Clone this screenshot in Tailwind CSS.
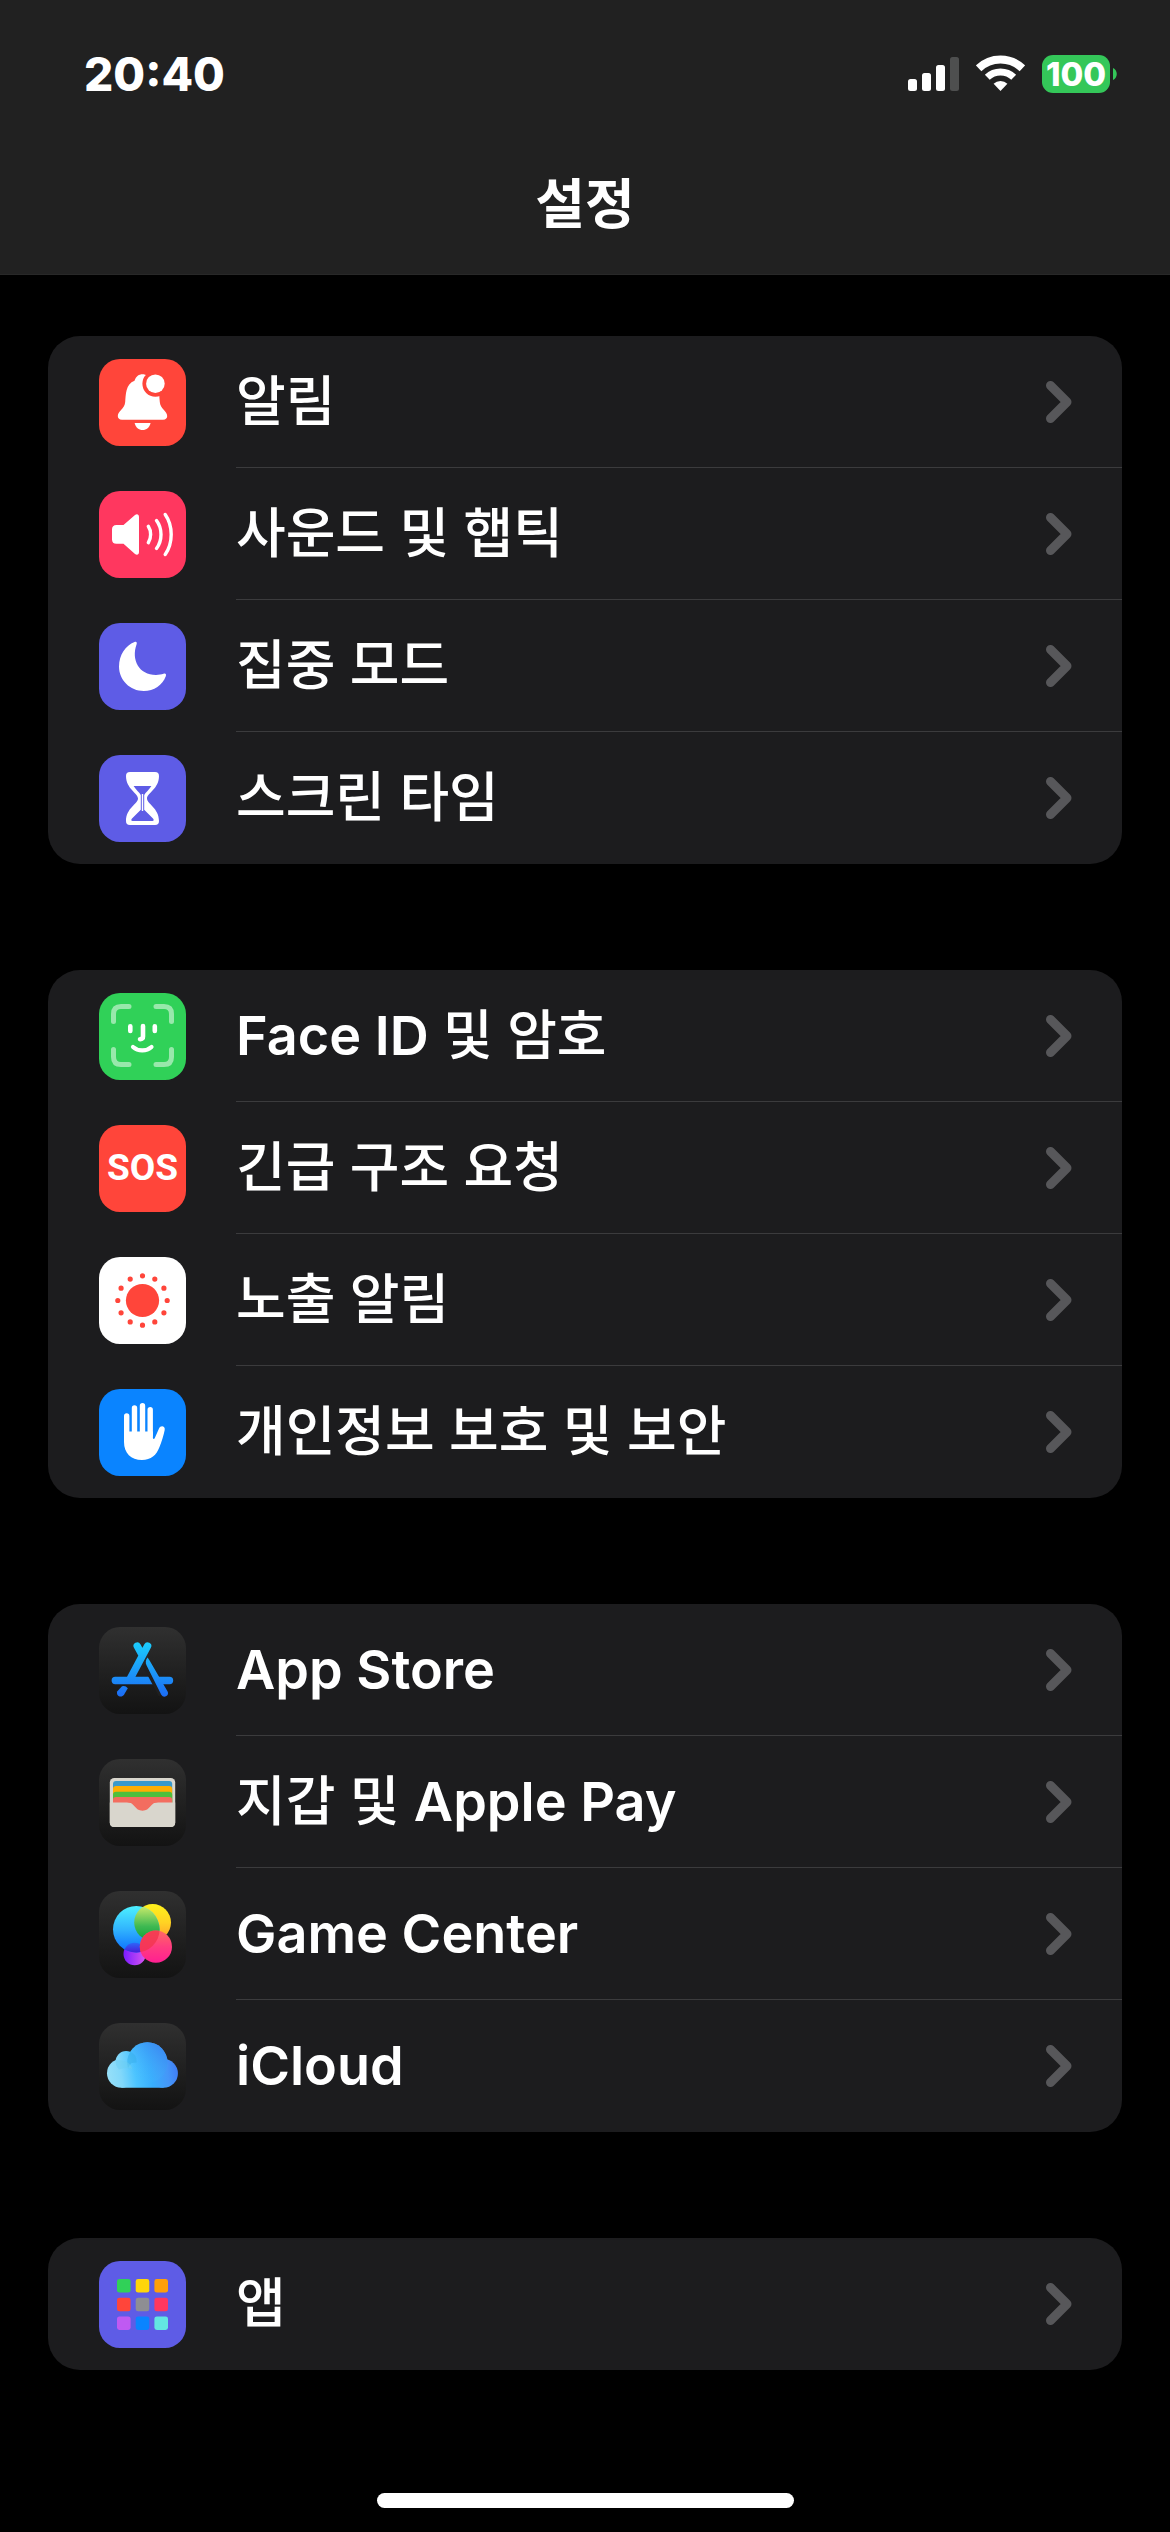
<!DOCTYPE html>
<html lang="ko">
<head>
  <meta charset="UTF-8">
  <meta name="viewport" content="width=device-width, initial-scale=1.0">
  <title>설정</title>
  <script src="https://cdn.jsdelivr.net/npm/@tailwindcss/browser@4"></script>
</head>
<body class="bg-black min-h-screen flex flex-col text-white font-['Inter','Noto_Sans_CJK_KR',sans-serif]">
  <!-- shared chevron -->
  <svg class="hidden" aria-hidden="true">
    <symbol id="chevron" viewBox="0 0 26 42">
      <path d="M4.5 4.5 21 21 4.5 37.5" fill="none" stroke="#57575a" stroke-width="9" stroke-linecap="round" stroke-linejoin="round"/>
    </symbol>
  </svg>

  <header class="bg-[#212121] border-b border-[#282828] h-[275px] flex flex-col">
    <div class="flex items-center justify-between h-[148px] pl-[84px] pr-[53px]">
      <time class="text-[46px] leading-[56px] font-extrabold">20:40</time>
      <div class="flex items-center gap-[17px]">
        <svg class="w-[51px] h-[38px]" viewBox="0 0 51 38" fill="#fff">
          <rect x="0" y="24" width="9" height="12" rx="2.5"/>
          <rect x="14" y="18" width="9" height="18" rx="2.5"/>
          <rect x="28" y="10" width="9" height="26" rx="2.5"/>
          <rect x="42" y="2" width="9" height="34" rx="2.5" fill="#4e4f4f"/>
        </svg>
        <svg class="w-[49px] h-[38px]" viewBox="0 0 49 38" fill="none" stroke="#fff">
          <path d="M2.6 13.3A31.5 31.5 0 0 1 46.4 13.3" stroke-width="8"/>
          <path d="M11.3 22.3A19 19 0 0 1 37.7 22.3" stroke-width="7"/>
          <path d="M24.5 36 17.6 28.8A10 10 0 0 1 31.4 28.8Z" fill="#fff" stroke="none"/>
        </svg>
        <div class="flex items-center gap-[3px]">
          <span class="w-[68px] h-[38px] flex items-center justify-center rounded-[11px] bg-[#34c759] text-[33px] leading-[38px] font-extrabold">100</span>
          <svg class="w-[4px] h-[12px]" viewBox="0 0 4 12"><path d="M0 0C5 2 5 10 0 12Z" fill="#34c759"/></svg>
        </div>
      </div>
    </div>
    <h1 class="text-[54px] leading-[114px] font-bold text-center">설정</h1>
  </header>

  <main class="flex flex-col gap-[106px] px-12 pt-[61px] pb-[64px] text-[54px] leading-[64px] font-medium">
    <ul class="rounded-[32px] bg-[#1c1c1e] overflow-hidden">
      <li>
        <a href="#" class="flex items-center gap-[50px] pl-[51px]">
          <svg class="size-[87px] shrink-0 rounded-[21px] bg-[#ff453a]" viewBox="0 0 87 87" fill="#fff">
            <path d="M23 60.7C20 60.7 18.8 59 18.8 57C18.8 52 25.6 50 26.2 43C26.8 36 26.5 25 35.5 21.8C37 17.3 40 15.3 43.5 15.3C47 15.3 50 17.3 51.5 21.8C60.5 25 60.2 36 60.8 43C61.4 50 68.2 52 68.2 57C68.2 59 67 60.7 64 60.7Z"/>
            <path d="M35.6 64H51.6C50.5 68.5 47.5 71 43.6 71C39.7 71 36.7 68.5 35.6 64Z"/>
            <circle cx="56.4" cy="24.7" r="13" fill="#ff453a"/>
            <circle cx="56.4" cy="24.7" r="9.3"/>
          </svg>
          <div class="flex flex-1 items-center justify-between h-[132px] pr-[50px] border-b border-[#3b3b3d]">
            알림
            <svg class="w-[26px] h-[42px]"><use href="#chevron"/></svg>
          </div>
        </a>
      </li>
      <li>
        <a href="#" class="flex items-center gap-[50px] pl-[51px]">
          <svg class="size-[87px] shrink-0 rounded-[21px] bg-[#ff375f]" viewBox="0 0 87 87" fill="none" stroke="#fff" stroke-width="3.4" stroke-linecap="round">
            <path d="M17.5 34H24.5L36 24C38 22.4 40 23.3 40 26V61C40 63.7 38 64.6 36 63L24.5 52.8H17.5C14.5 52.8 13 51.2 13 48.5V38.3C13 35.6 14.5 34 17.5 34Z" fill="#fff" stroke="none"/>
            <path d="M49.3 35.3C52.4 40 52.4 47 49.3 51.7M57.5 29.5C63.5 37.5 63.5 49.5 57.5 57.5M66.2 23.5C74.2 35 74.2 52 66.2 63.5"/>
          </svg>
          <div class="flex flex-1 items-center justify-between h-[132px] pr-[50px] border-b border-[#3b3b3d]">
            사운드 및 햅틱
            <svg class="w-[26px] h-[42px]"><use href="#chevron"/></svg>
          </div>
        </a>
      </li>
      <li>
        <a href="#" class="flex items-center gap-[50px] pl-[51px]">
          <svg class="size-[87px] shrink-0 rounded-[21px] bg-[#5e5ce6]" viewBox="0 0 87 87" fill="#fff">
            <path d="M35.5 19C37.5 18.2 38.2 19.5 37.6 21.3C32 37 40 52 57 52C60 52 62.5 51.5 64.5 50.8C66.5 50 67.6 51.3 66.8 53.2C63.5 62 55 68 44.8 68C31 68 20 57 20 43.5C20 32 26.5 22.5 35.5 19Z"/>
          </svg>
          <div class="flex flex-1 items-center justify-between h-[132px] pr-[50px] border-b border-[#3b3b3d]">
            집중 모드
            <svg class="w-[26px] h-[42px]"><use href="#chevron"/></svg>
          </div>
        </a>
      </li>
      <li>
        <a href="#" class="flex items-center gap-[50px] pl-[51px]">
          <svg class="size-[87px] shrink-0 rounded-[21px] bg-[#5e5ce6]" viewBox="0 0 87 87" fill="#fff">
            <path d="M31 17H56C58.8 17 60 18.6 60 21C60 34 48 38 48 43.5C48 49 60 53 60 66C60 68.4 58.8 70 56 70H31C28.2 70 27 68.4 27 66C27 53 39 49 39 43.5C39 38 27 34 27 21C27 18.6 28.2 17 31 17Z"/>
            <path d="M34.6 31H52.4C50.3 34.5 46.5 37.5 45.2 40V54.8L54 63.5C55.2 65 54.8 66 53.5 66H33.5C32.2 66 31.8 65 33 63.5L41.8 54.8V40C40.5 37.5 36.7 34.5 34.6 31Z" fill="#5e5ce6"/>
            <path d="M42.8 39H44.2V56H42.8Z"/>
          </svg>
          <div class="flex flex-1 items-center justify-between h-[132px] pr-[50px]">
            스크린 타임
            <svg class="w-[26px] h-[42px]"><use href="#chevron"/></svg>
          </div>
        </a>
      </li>
    </ul>

    <ul class="rounded-[32px] bg-[#1c1c1e] overflow-hidden">
      <li>
        <a href="#" class="flex items-center gap-[50px] pl-[51px]">
          <svg class="size-[87px] shrink-0 rounded-[21px] bg-[#30d158]" viewBox="0 0 87 87" fill="none" stroke="#fff" stroke-linecap="round">
            <path d="M14.5 28.5V21Q14.5 13.5 22 13.5H30M57 13.5H65Q72.5 13.5 72.5 21V28.5M72.5 56.5V64Q72.5 71.5 65 71.5H57M30 71.5H22Q14.5 71.5 14.5 64V56.5" stroke="#98e8ab" stroke-width="5"/>
            <path d="M31.3 33.3V38M55.8 33.3V38M44 33V43.5Q44 46 41 46.2" stroke-width="4.6"/>
            <path d="M34 54C39 58.5 47.5 58.5 52.5 54" stroke-width="4.2"/>
          </svg>
          <div class="flex flex-1 items-center justify-between h-[132px] pr-[50px] border-b border-[#3b3b3d]">
            <span><span class="font-semibold">Face ID</span> 및 암호</span>
            <svg class="w-[26px] h-[42px]"><use href="#chevron"/></svg>
          </div>
        </a>
      </li>
      <li>
        <a href="#" class="flex items-center gap-[50px] pl-[51px]">
          <span class="size-[87px] shrink-0 rounded-[21px] bg-[#ff453a] flex items-center justify-center font-['Roboto',sans-serif] font-bold text-[37px] leading-[44px]">SOS</span>
          <div class="flex flex-1 items-center justify-between h-[132px] pr-[50px] border-b border-[#3b3b3d]">
            긴급 구조 요청
            <svg class="w-[26px] h-[42px]"><use href="#chevron"/></svg>
          </div>
        </a>
      </li>
      <li>
        <a href="#" class="flex items-center gap-[50px] pl-[51px]">
          <svg class="size-[87px] shrink-0 rounded-[21px] bg-white" viewBox="0 0 87 87">
            <circle cx="43.5" cy="43.5" r="16.6" fill="#ff453a"/>
            <circle cx="43.5" cy="43.5" r="24.7" fill="none" stroke="#ff453a" stroke-width="5.2" stroke-linecap="round" pathLength="12" stroke-dasharray="0 1"/>
          </svg>
          <div class="flex flex-1 items-center justify-between h-[132px] pr-[50px] border-b border-[#3b3b3d]">
            노출 알림
            <svg class="w-[26px] h-[42px]"><use href="#chevron"/></svg>
          </div>
        </a>
      </li>
      <li>
        <a href="#" class="flex items-center gap-[50px] pl-[51px]">
          <svg class="size-[87px] shrink-0 rounded-[21px] bg-[#0a84ff]" viewBox="0 0 87 87" fill="#fff" stroke="#fff" stroke-linecap="round">
            <path d="M27.7 27V50M35.5 19V46M43.5 16.8V46M51.2 20.8V46" stroke-width="5.4" fill="none"/>
            <path d="M25 42.5H53.9V49.3C54.5 50.5 55.2 50.3 55.8 49L60 39.5C61.5 36 66.5 37 65.7 41C64.8 46 62.5 53 60.5 58C57.5 66 52 71 43 71C32 71 25 64 25 53Z" stroke="none"/>
          </svg>
          <div class="flex flex-1 items-center justify-between h-[132px] pr-[50px]">
            개인정보 보호 및 보안
            <svg class="w-[26px] h-[42px]"><use href="#chevron"/></svg>
          </div>
        </a>
      </li>
    </ul>

    <ul class="rounded-[32px] bg-[#1c1c1e] overflow-hidden">
      <li>
        <a href="#" class="flex items-center gap-[50px] pl-[51px]">
          <svg class="size-[87px] shrink-0 rounded-[21px] bg-linear-to-b from-[#303030] to-[#131313]" viewBox="0 0 87 87">
            <defs>
              <linearGradient id="store" gradientUnits="userSpaceOnUse" x1="0" y1="15" x2="0" y2="70">
                <stop offset="0" stop-color="#1bcdfc"/>
                <stop offset="1" stop-color="#1c6bf5"/>
              </linearGradient>
            </defs>
            <path d="M16.3 53.5H70.5M48.6 19 30.5 53M38.2 19 42.6 27" fill="none" stroke="url(#store)" stroke-width="7.4" stroke-linecap="round"/>
            <path d="M23 59.3Q26.5 58.3 28.8 61.2L25 67.8C22.3 71.6 16.3 68.6 18.4 64.2Z" fill="url(#store)"/>
            <path d="M46 38 62 68" fill="none" stroke="#1f1f1f" stroke-width="5"/>
            <path d="M48.6 30.5C46.6 32.6 46.2 36 47.6 38.6L62.3 67.8C64.7 71.8 70.6 68.6 68.6 64.4L50.6 33.5Z" fill="url(#store)"/>
          </svg>
          <div class="flex flex-1 items-center justify-between h-[132px] pr-[50px] border-b border-[#3b3b3d]">
            <span class="font-semibold">App Store</span>
            <svg class="w-[26px] h-[42px]"><use href="#chevron"/></svg>
          </div>
        </a>
      </li>
      <li>
        <a href="#" class="flex items-center gap-[50px] pl-[51px]">
          <svg class="size-[87px] shrink-0 rounded-[21px] bg-linear-to-b from-[#303030] to-[#131313]" viewBox="0 0 87 87">
            <rect x="10.8" y="19" width="65.4" height="49" rx="4.5" fill="#d9d6cd"/>
            <path d="M14 44V25Q14 22 17 22H70.2Q73.2 22 73.2 25V44Z" fill="#3999cc"/>
            <path d="M14 44V30Q14 27 17 27H70.2Q73.2 27 73.2 30V44Z" fill="#ffae03"/>
            <path d="M14 44V35.7Q14 32.7 17 32.7H70.2Q73.2 32.7 73.2 35.7V44Z" fill="#4ebf3d"/>
            <path d="M14 44V41Q14 38 17 38H70.2Q73.2 38 73.2 41V44Z" fill="#f36d5f"/>
            <path d="M10.8 43.5H28C36 43.5 35.5 51.7 43.5 51.7C51.5 51.7 51 43.5 59 43.5H76.2V63.5Q76.2 68 71.7 68H15.3Q10.8 68 10.8 63.5Z" fill="#d9d6cd"/>
            <path d="M28 43C36 43.5 35.5 51.7 43.5 51.7C51.5 51.7 51 43.5 59 43Z" fill="#f36d5f"/>
          </svg>
          <div class="flex flex-1 items-center justify-between h-[132px] pr-[50px] border-b border-[#3b3b3d]">
            <span>지갑 및 <span class="font-semibold">Apple Pay</span></span>
            <svg class="w-[26px] h-[42px]"><use href="#chevron"/></svg>
          </div>
        </a>
      </li>
      <li>
        <a href="#" class="flex items-center gap-[50px] pl-[51px]">
          <svg class="size-[87px] shrink-0 rounded-[21px] bg-linear-to-b from-[#303030] to-[#131313]" viewBox="0 0 87 87">
            <defs>
              <linearGradient id="gc-blue" x1="0" y1="0" x2="0" y2="1"><stop offset="0" stop-color="#4df0ff"/><stop offset=".5" stop-color="#31b4fd"/><stop offset="1" stop-color="#0a6cff"/></linearGradient>
              <linearGradient id="gc-yellow" x1="0" y1="0" x2="0" y2="1"><stop offset="0" stop-color="#fff11c"/><stop offset=".5" stop-color="#ffd323"/><stop offset="1" stop-color="#ff9a2e"/></linearGradient>
              <linearGradient id="gc-green" gradientUnits="userSpaceOnUse" x1="0" y1="16" x2="0" y2="48"><stop offset="0" stop-color="#c4e86a"/><stop offset=".6" stop-color="#3fb952"/><stop offset="1" stop-color="#12a63c"/></linearGradient>
              <linearGradient id="gc-pink" x1="0" y1="0" x2="0" y2="1"><stop offset="0" stop-color="#ff6a62"/><stop offset=".5" stop-color="#ff3d80"/><stop offset="1" stop-color="#ff1f92"/></linearGradient>
              <linearGradient id="gc-purple"><stop offset="0" stop-color="#7a1cff"/><stop offset="1" stop-color="#d957f0"/></linearGradient>
              <linearGradient id="gc-indigo" gradientUnits="userSpaceOnUse" x1="0" y1="51" x2="0" y2="62"><stop offset="0" stop-color="#2a6cfb"/><stop offset="1" stop-color="#4a18d8"/></linearGradient>
              <clipPath id="gc-big"><circle cx="37.3" cy="38.3" r="23.3"/></clipPath>
            </defs>
            <circle cx="35.7" cy="63" r="11.2" fill="url(#gc-purple)"/>
            <circle cx="53.6" cy="31.5" r="18.4" fill="url(#gc-yellow)"/>
            <circle cx="37.3" cy="38.3" r="23.3" fill="url(#gc-blue)"/>
            <g clip-path="url(#gc-big)">
              <circle cx="35.7" cy="63" r="11.2" fill="url(#gc-indigo)"/>
              <circle cx="53.6" cy="31.5" r="18.4" fill="url(#gc-green)"/>
            </g>
            <circle cx="56.9" cy="55.7" r="16.1" fill="url(#gc-pink)"/>
            <g clip-path="url(#gc-big)">
              <circle cx="56.9" cy="55.7" r="16.1" fill="#f3344f" fill-opacity=".8"/>
            </g>
          </svg>
          <div class="flex flex-1 items-center justify-between h-[132px] pr-[50px] border-b border-[#3b3b3d]">
            <span class="font-semibold">Game Center</span>
            <svg class="w-[26px] h-[42px]"><use href="#chevron"/></svg>
          </div>
        </a>
      </li>
      <li>
        <a href="#" class="flex items-center gap-[50px] pl-[51px]">
          <svg class="size-[87px] shrink-0 rounded-[21px] bg-linear-to-b from-[#303030] to-[#131313]" viewBox="0 0 87 87">
            <defs>
              <linearGradient id="cloud" gradientUnits="userSpaceOnUse" x1="8" y1="56" x2="79" y2="46"><stop offset="0" stop-color="#98e0f8"/><stop offset=".2" stop-color="#82d8fa"/><stop offset=".4" stop-color="#4cc4ff"/><stop offset=".62" stop-color="#38aefd"/><stop offset=".85" stop-color="#4596f8"/><stop offset="1" stop-color="#3f7cf5"/></linearGradient>
              <linearGradient id="cloud-top" gradientUnits="userSpaceOnUse" x1="34" y1="52" x2="62" y2="24"><stop offset="0" stop-color="#46bfff" stop-opacity="0"/><stop offset="1" stop-color="#3a8df2"/></linearGradient>
            </defs>
            <g fill="url(#cloud)">
              <circle cx="22.4" cy="50.3" r="14.4"/>
              <circle cx="27.1" cy="38.7" r="10.6"/>
              <circle cx="64.6" cy="50.4" r="14.3"/>
              <circle cx="48.3" cy="39.5" r="20.2"/>
              <path d="M22.4 42H64.6V64.7H22.4Z"/>
            </g>
            <circle cx="48.3" cy="39.5" r="20.2" fill="url(#cloud-top)"/>
            <path d="M31.5 28.8A20.2 20.2 0 0 0 29 45A14.4 14.4 0 0 1 32.5 40L37.5 39.5A10.6 10.6 0 0 0 31.5 28.8Z" fill="#35aeea" fill-opacity=".5"/>
            <path d="M17 37A10.6 10.6 0 0 0 20 46.5Q27 44 33.5 46Q31 37 17 37Z" fill="#6ccdf2" fill-opacity=".5"/>
          </svg>
          <div class="flex flex-1 items-center justify-between h-[132px] pr-[50px]">
            <span class="font-semibold">iCloud</span>
            <svg class="w-[26px] h-[42px]"><use href="#chevron"/></svg>
          </div>
        </a>
      </li>
    </ul>

    <ul class="rounded-[32px] bg-[#1c1c1e] overflow-hidden">
      <li>
        <a href="#" class="flex items-center gap-[50px] pl-[51px]">
          <svg class="size-[87px] shrink-0 rounded-[21px] bg-[#5e5ce6]" viewBox="0 0 87 87">
            <rect x="18" y="18" width="13.6" height="13.6" rx="2.4" fill="#30d158"/>
            <rect x="36.7" y="18" width="13.6" height="13.6" rx="2.4" fill="#ffd60a"/>
            <rect x="55.4" y="18" width="13.6" height="13.6" rx="2.4" fill="#ff9f0a"/>
            <rect x="18" y="36.7" width="13.6" height="13.6" rx="2.4" fill="#ff453a"/>
            <rect x="36.7" y="36.7" width="13.6" height="13.6" rx="2.4" fill="#8e8e93"/>
            <rect x="55.4" y="36.7" width="13.6" height="13.6" rx="2.4" fill="#ff375f"/>
            <rect x="18" y="55.4" width="13.6" height="13.6" rx="2.4" fill="#bf5af2"/>
            <rect x="36.7" y="55.4" width="13.6" height="13.6" rx="2.4" fill="#0a84ff"/>
            <rect x="55.4" y="55.4" width="13.6" height="13.6" rx="2.4" fill="#63e6e2"/>
          </svg>
          <div class="flex flex-1 items-center justify-between h-[132px] pr-[50px]">
            앱
            <svg class="w-[26px] h-[42px]"><use href="#chevron"/></svg>
          </div>
        </a>
      </li>
    </ul>
  </main>

  <!-- home indicator -->
  <div class="mt-auto mx-auto mb-6 w-[417px] h-[15px] rounded-full bg-white"></div>
</body>
</html>
